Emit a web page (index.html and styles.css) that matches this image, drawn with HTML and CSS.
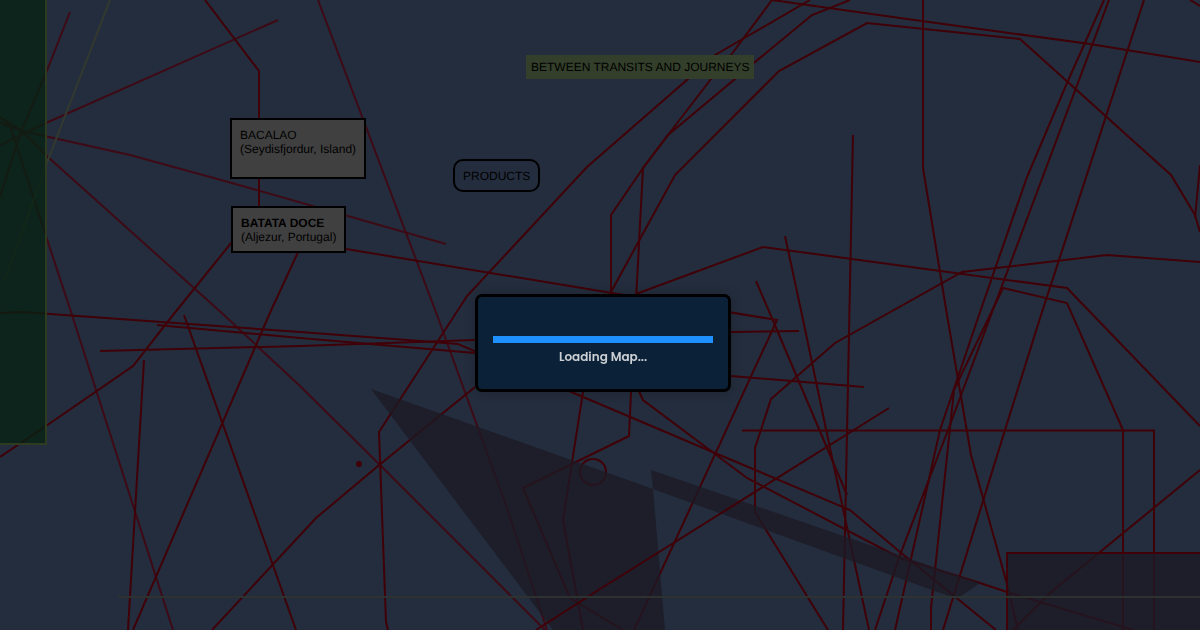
FILE: index.html
```html
<!DOCTYPE html>
<html lang="en">

<head>
  <meta charset="utf-8">
  <title>Map</title>
  <link rel="stylesheet" href="styles.css">
</head>

<body>
  <main class="map">
    <svg class="links" aria-hidden="true">
      <!-- thin connections -->
      <g class="thin">
        <polyline points="278,20 46,123 0,145" />
        <polyline points="70,12 46,73 20,134 0,197" />
        <polyline points="0,123 22,131 130,155 232,183 446,244" />
        <polyline points="0,117 22,131 48,157 224,315 300,386 380,465 545,630" />
        <polyline points="0,117 10,126 46,236 72,315 173,630" />
        <polyline points="318,0 437,315 507,508 547,630" />
      </g>

      <!-- connections -->
      <g class="line">
        <polyline points="205,0 259,71 259,230" />
        <polyline points="0,313 22,312 300,332 407,340 458,344 569,391 715,453 850,510 900,552 996,630" />
        <polyline points="157,325 300,338 475,353 731,376 864,387" />
        <polyline points="100,351 300,346 475,340 731,332 799,331" />
        <polyline points="240,232 173,315 133,366 46,426 0,457" />
        <polyline points="299,250 269,315 133,630" />
        <polyline points="144,360 128,630" />
        <polyline points="184,315 296,630" />
        <polyline points="212,630 316,518 378,466 475,387" />
        <polyline points="340,248 636,297 777,320 634,630" />
        <polyline points="388,630 386,622 379,432 467,296 587,167 688,79 715,55 810,0" />
        <polyline points="772,0 731,55 711,79 668,135 643,168 611,215 611,300" />
        <polyline points="850,0 812,15 755,62 735,79 668,135 643,168 636,300 631,392 629,436 523,488 570,598 623,630" />
        <polyline points="611,292 675,175 779,71 867,23 1020,39 1171,175 1195,215 1200,232" />
        <polyline points="583,385 583,392 563,520 583,630" />
        <polyline points="772,0 900,18 1090,44 1200,62" />
        <polyline points="636,294 763,247 1067,288 1200,426" />
        <polyline points="1200,262 1107,255 962,272 835,343 771,399 755,448 755,512 828,630" />
        <polyline points="923,0 923,168 947,315 971,455 1007,584 1018,630" />
        <polyline points="853,135 843,630" />
        <polyline points="785,236 802,315 830,448 869,630" />
        <polyline points="756,281 777,330 847,495" />
        <polyline points="742,430.5 1154,430.5 1154,630" />
        <polyline points="1104,0 1067,83 1027,177 979,315 940,430 895,630" />
        <polyline points="1109,0 991,315 948,430 900,555 875,630" />
        <polyline points="1144,0 1041,315 1005,430 943,630" />
        <polyline points="931,630 931,608 954,390 1003,288 1067,303 1123,430 1123,630" />
        <polyline points="1200,470 1050,593 1013,630" />
        <polyline points="636,385 643,400 747,478 900,558 980,583 1007,592 1133,630" />
        <polyline points="1190,0 1200,6" />
        <polyline points="1200,165 1195,218" />
        <circle cx="593" cy="472" r="13" />
      </g>

      <!-- areas -->
      <polygon class="area" points="371,389 653,489 665,630 553,630" />
      <polygon class="area" points="651,470 980,583 957,599 653,489" />
      <rect class="area outlined" x="1007" y="553" width="240" height="160" />

      <polyline class="line" points="889,408 600,589 536,630" />
      <circle class="dot" cx="359" cy="464" r="2" />

      <polyline class="olive" points="110,0 48,160 5,280" />
      <polyline class="olive faint" points="118,597 1200,597" />
      <rect class="field" x="-10" y="-10" width="56" height="454" />
    </svg>

    <div class="node bacalao">BACALAO<br>(Seydisfjordur, Island)</div>
    <div class="node batata"><b>BATATA DOCE</b><br>(Aljezur, Portugal)</div>
    <div class="tag">BETWEEN TRANSITS AND JOURNEYS</div>
    <div class="group">PRODUCTS</div>
  </main>

  <div class="overlay">
    <div class="loader">
      <progress id="load" value="100" max="100"></progress>
      <label for="load">Loading Map...</label>
    </div>
  </div>
</body>

</html>
```

FILE: styles.css
```css
body {
  margin: 0;
  background: #242d3d;
  font-family: "Liberation Sans", Arial, sans-serif;
  font-size: 12px;
  line-height: 14px;
  color: #000;
}

.map {
  position: relative;
  height: 100vh;
  overflow: hidden;
  text-rendering: geometricPrecision;
}

.links {
  position: absolute;
  width: 100%;
  height: 100%;
}

.thin,
.line {
  fill: none;
  stroke: #400008;
  stroke-width: 2;
}

.thin {
  stroke: #3d0a16;
}

.area {
  fill: rgba(28, 25, 36, 0.75);
}

.outlined {
  stroke: #400008;
  stroke-width: 2;
}

.dot {
  fill: #400008;
  stroke: #400008;
  stroke-width: 2;
}

.olive {
  fill: none;
  stroke: #33392f;
  stroke-width: 2;
}

.faint {
  stroke: #2d3230;
}

.field {
  fill: rgba(6, 34, 18, 0.75);
  stroke: #2f3b20;
  stroke-width: 2;
}

/* map nodes */
.node,
.tag,
.group {
  position: absolute;
  box-sizing: border-box;
  white-space: nowrap;
}

.node {
  padding: 8px 8px 7px;
  border: 2px solid #000;
  background: #404041;
}

.bacalao {
  left: 230px;
  top: 118px;
  width: 136px;
  height: 61px;
}

.batata {
  left: 231px;
  top: 206px;
}

.tag {
  left: 526px;
  top: 55px;
  padding: 5px;
  background: #333f2b;
}

.group {
  left: 453px;
  top: 159px;
  padding: 8px 8px 7px;
  border: 2px solid #000;
  border-radius: 10px;
}

/* loading box */
.overlay {
  position: fixed;
  inset: 0;
  display: flex;
  align-items: center;
  justify-content: center;
  padding: 56px 0 0 6px;
}

.loader {
  display: flex;
  flex-direction: column;
  gap: 5px;
  width: 220px;
  padding: 39px 15px 23px;
  border: 3px solid #000;
  border-radius: 7px;
  background: #0b2137;
  box-shadow: 0 0 12px rgba(0, 0, 0, 0.2);
  color: #ccd0d4;
  font-family: Poppins, Inter, sans-serif;
  font-weight: 600;
  line-height: 18px;
  text-align: center;
}

progress {
  display: block;
  width: 100%;
  height: 7px;
  border: 0;
  appearance: none;
  background: #0b2137;
}

progress::-webkit-progress-bar {
  background: #0b2137;
}

progress::-webkit-progress-value {
  background: #1e90ff;
}

progress::-moz-progress-bar {
  background: #1e90ff;
}
```
